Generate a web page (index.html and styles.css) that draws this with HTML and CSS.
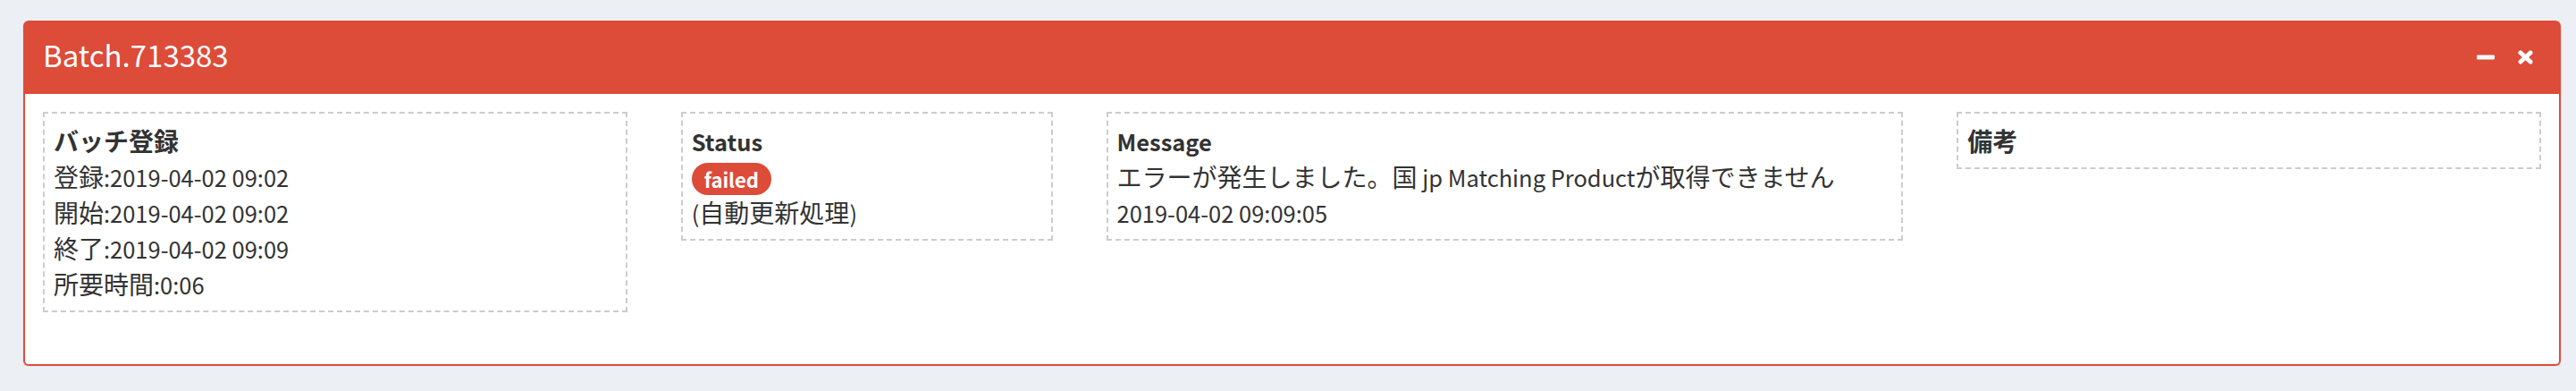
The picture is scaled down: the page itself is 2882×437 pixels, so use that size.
FILE: index.html
```html
<!DOCTYPE html>
<html lang="ja">
<head>
  <meta charset="UTF-8" />
  <meta name="viewport" content="width=device-width, initial-scale=1.0"/>
  <title>Batch.713383</title>
  <link rel="stylesheet" href="styles.css">
</head>
<body>
  <section class="content">
    <div class="box box-danger">
      <div class="box-header">
        <h3 class="box-title">Batch.713383</h3>
        <div class="box-tools">
          <button class="btn-tool" title="最小化">
            <svg width="20" height="6" viewBox="0 0 20 6"><rect x="0" y="0.5" width="20" height="5" rx="1.2" fill="#fff"/></svg>
          </button>
          <button class="btn-tool" title="閉じる">
            <svg width="17" height="16" viewBox="0 0 17 16"><path d="M3 3 L14 13 M14 3 L3 13" stroke="#fff" stroke-width="5" stroke-linecap="round"/></svg>
          </button>
        </div>
      </div>
      <div class="box-body">
        <div class="row">
          <div class="col col-3">
            <div class="cell">
              <div class="cell-title">バッチ登録</div>
              <div>登録<span class="lat">:2019-04-02 09:02</span></div>
              <div>開始<span class="lat">:2019-04-02 09:02</span></div>
              <div>終了<span class="lat">:2019-04-02 09:09</span></div>
              <div>所要時間<span class="lat">:0:06</span></div>
            </div>
          </div>
          <div class="col col-2">
            <div class="cell">
              <div class="cell-title"><span class="lat">Status</span></div>
              <div class="badge-row"><span class="badge bg-red">failed</span></div>
              <div><span class="lat">(</span>自動更新処理<span class="lat">)</span></div>
            </div>
          </div>
          <div class="col col-4">
            <div class="cell">
              <div class="cell-title"><span class="lat">Message</span></div>
              <div>エラーが発生しました。国<span class="lat"> jp Matching Product</span>が取得できません</div>
              <div><span class="lat">2019-04-02 09:09:05</span></div>
            </div>
          </div>
          <div class="col col-3">
            <div class="cell">
              <div class="cell-title">備考</div>
            </div>
          </div>
        </div>
      </div>
    </div>
  </section>
</body>
</html>
```

FILE: styles.css
```css
body {
  margin: 0;
  background-color: #ecf0f5;
  color: #333;
  font-family: "Noto Sans CJK JP", "Source Sans Pro", sans-serif;
  font-size: 28px;
  line-height: 40px;
}
/* latin glyphs of the CJK font run wide, shrink them a little */
.lat {
  font-size: 0.91em;
  line-height: 1;
}
.content {
  padding: 23px 17px 0 26px;
}
.box {
  background: #fff;
  border: 2px solid #dd4b39;
  border-radius: 6px;
  box-shadow: 0 2px 2px rgba(0, 0, 0, 0.1);
}
.box-header {
  display: flex;
  justify-content: space-between;
  align-items: center;
  height: 80px;
  padding: 0 29px 0 20px;
  background: #dd4b39;
  color: #fff;
}
.box-title {
  margin: 0 0 8px;
  font-size: 33px;
  font-weight: normal;
  line-height: 36px;
}
.box-tools {
  display: flex;
  align-items: center;
  gap: 26px;
  margin-bottom: 3px;
}
.btn-tool {
  display: flex;
  padding: 0;
  border: none;
  background: transparent;
  cursor: pointer;
}
.box-body {
  padding: 20px 20px 58px;
}
.row {
  display: flex;
  align-items: flex-start;
  margin: 0 -30px;
}
.col {
  box-sizing: border-box;
  padding: 0 30px;
}
.col-2 { width: 16.6667%; }
.col-3 { width: 25%; }
.col-4 { width: 33.3333%; }
.cell {
  border: 2px dashed #ccc;
  padding: 10px;
}
.cell-title {
  font-weight: bold;
}
.badge-row {
  height: 40px;
}
.badge {
  display: inline-block;
  margin-top: 5px;
  padding: 6px 14px;
  border-radius: 20px;
  font-size: 22px;
  font-weight: bold;
  line-height: 24px;
  vertical-align: top;
  color: #fff;
}
.bg-red {
  background-color: #dd4b39;
}
```
